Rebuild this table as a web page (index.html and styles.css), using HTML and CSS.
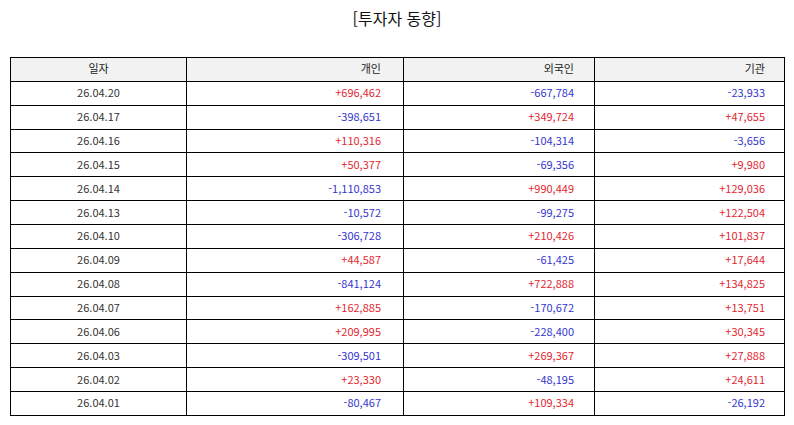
FILE: index.html
```html
<!DOCTYPE html>
<html lang="ko">
<head>
<meta charset="utf-8">
<link rel="stylesheet" href="styles.css">
</head>
<body>
<div class="page">
  <h1 class="title">[투자자 동향]</h1>
  <table class="grid">
    <colgroup>
      <col class="c-date"><col class="c-ind"><col class="c-for"><col class="c-ins">
    </colgroup>
    <thead>
      <tr><th class="center">일자</th><th class="p2">개인</th><th class="p3">외국인</th><th class="p4">기관</th></tr>
    </thead>
    <tbody>
      <tr><td class="center">26.04.20</td><td class="p2 up">+696,462</td><td class="p3 dn">-667,784</td><td class="p4 dn">-23,933</td></tr>
      <tr><td class="center">26.04.17</td><td class="p2 dn">-398,651</td><td class="p3 up">+349,724</td><td class="p4 up">+47,655</td></tr>
      <tr><td class="center">26.04.16</td><td class="p2 up">+110,316</td><td class="p3 dn">-104,314</td><td class="p4 dn">-3,656</td></tr>
      <tr><td class="center">26.04.15</td><td class="p2 up">+50,377</td><td class="p3 dn">-69,356</td><td class="p4 up">+9,980</td></tr>
      <tr><td class="center">26.04.14</td><td class="p2 dn">-1,110,853</td><td class="p3 up">+990,449</td><td class="p4 up">+129,036</td></tr>
      <tr><td class="center">26.04.13</td><td class="p2 dn">-10,572</td><td class="p3 dn">-99,275</td><td class="p4 up">+122,504</td></tr>
      <tr><td class="center">26.04.10</td><td class="p2 dn">-306,728</td><td class="p3 up">+210,426</td><td class="p4 up">+101,837</td></tr>
      <tr><td class="center">26.04.09</td><td class="p2 up">+44,587</td><td class="p3 dn">-61,425</td><td class="p4 up">+17,644</td></tr>
      <tr><td class="center">26.04.08</td><td class="p2 dn">-841,124</td><td class="p3 up">+722,888</td><td class="p4 up">+134,825</td></tr>
      <tr><td class="center">26.04.07</td><td class="p2 up">+162,885</td><td class="p3 dn">-170,672</td><td class="p4 up">+13,751</td></tr>
      <tr><td class="center">26.04.06</td><td class="p2 up">+209,995</td><td class="p3 dn">-228,400</td><td class="p4 up">+30,345</td></tr>
      <tr><td class="center">26.04.03</td><td class="p2 dn">-309,501</td><td class="p3 up">+269,367</td><td class="p4 up">+27,888</td></tr>
      <tr><td class="center">26.04.02</td><td class="p2 up">+23,330</td><td class="p3 dn">-48,195</td><td class="p4 up">+24,611</td></tr>
      <tr><td class="center">26.04.01</td><td class="p2 dn">-80,467</td><td class="p3 up">+109,334</td><td class="p4 dn">-26,192</td></tr>
    </tbody>
  </table>
</div>
</body>
</html>
```

FILE: styles.css
```css
html, body {
  margin: 0;
  padding: 0;
  background: #ffffff;
}
.page {
  padding: 7px 10px 0 10px;
  font-family: "Noto Sans CJK KR", "Noto Sans", sans-serif;
  color: #333333;
}
.title {
  margin: 0;
  text-align: center;
  font-size: 16px;
  font-weight: normal;
  line-height: 22px;
  color: #111111;
}
.grid {
  margin-top: 28px;
  width: 774px;
  border-collapse: collapse;
  table-layout: fixed;
  font-size: 11px;
}
.c-date { width: 176px; }
.c-ind { width: 217px; }
.c-for { width: 191px; }
.c-ins { width: 190px; }
.grid th, .grid td {
  border: 1px solid #000000;
  height: 20.87px;
  padding: 0 0 2px 0;
  text-align: right;
  font-weight: normal;
  line-height: 14px;
  white-space: nowrap;
}
.grid th {
  background: #f2f2f2;
  color: #222222;
}
.grid .center { text-align: center; }
.grid .p2 { padding-right: 22px; }
.grid .p3 { padding-right: 20px; }
.grid .p4 { padding-right: 19px; }
.up { color: #e3262f; }
.dn { color: #3535cf; }
```
